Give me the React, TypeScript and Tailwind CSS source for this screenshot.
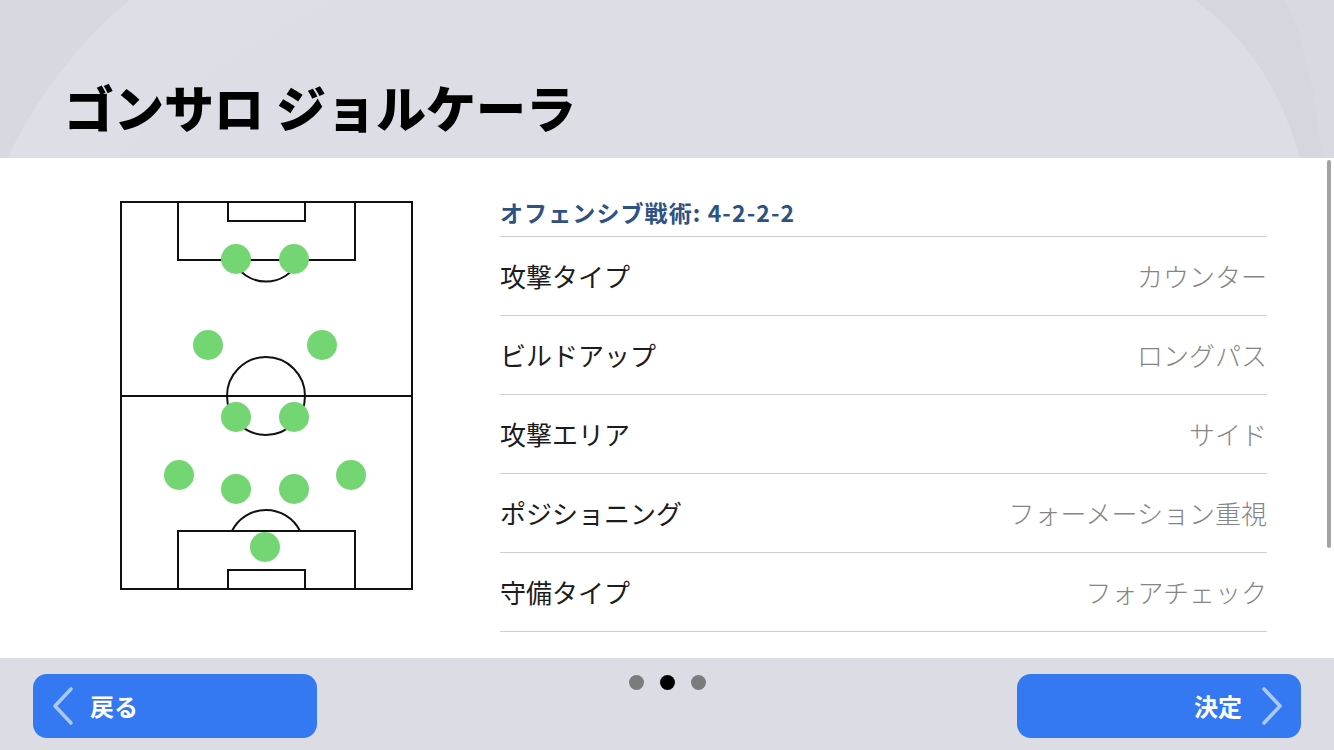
const rows = [
  { label: "攻撃タイプ", value: "カウンター" },
  { label: "ビルドアップ", value: "ロングパス" },
  { label: "攻撃エリア", value: "サイド" },
  { label: "ポジショニング", value: "フォーメーション重視" },
  { label: "守備タイプ", value: "フォアチェック" },
  { label: "守備エリア", value: "ミドル" },
];

// player dots, in pitch coords (pitch box starts at 1,1)
const players = [
  [116, 58], [174, 58],
  [88, 144], [202, 144],
  [116, 216], [174, 216],
  [59, 274], [231, 274],
  [116, 288], [174, 288],
  [145, 346],
];

export default function App() {
  return (
    <div
      className="relative flex h-[750px] w-[1334px] flex-col overflow-hidden bg-white"
      style={{ fontFamily: '"Noto Sans CJK JP", "Noto Sans", sans-serif' }}
    >
      <header className="relative h-[158px] shrink-0 overflow-hidden bg-[#dcdde5]">
        <HeaderDecor />
        <h1 className="relative pl-[64px] pt-[81px] text-[50px] font-black leading-none text-black">
          ゴンサロ<span className="ml-[12px]">ジョルケーラ</span>
        </h1>
      </header>

      <main className="relative flex h-[500px] shrink-0 bg-white">
        <div className="pl-[120px] pt-[43px]">
          <Pitch />
        </div>
        <div className="ml-[87px] w-[767px]">
          <div className="flex h-[79px] items-end border-b border-[#cdcdd2] pb-[12px]">
            <span className="text-[23px] font-bold leading-[23px] tracking-[1.1px] text-[#2d5283]">オフェンシブ戦術: 4-2-2-2</span>
          </div>
          {rows.map((r) => (
            <div key={r.label} className="flex h-[79px] items-center justify-between border-b border-[#cdcdd2]">
              <span className="text-[26px] leading-none text-[#1c1c1c]">{r.label}</span>
              <span className="text-[26px] font-light leading-none text-[#858585]">{r.value}</span>
            </div>
          ))}
        </div>
        <div className="absolute right-[3px] top-[2px] h-[388px] w-[4px] rounded-full bg-[#a3a3a3]" />
      </main>

      <footer className="relative flex h-[92px] shrink-0 items-start justify-between bg-[#dcdde4] px-[33px] pt-[16px]">
        <button className="flex h-[64px] w-[284px] items-center rounded-[14px] bg-[#3479f1] pl-[18px]">
          <Chevron dir="left" />
          <span className="ml-[15px] text-[24px] font-bold text-white">戻る</span>
        </button>
        <div className="flex gap-[16px] pt-[1px]">
          <span className="h-[15px] w-[15px] rounded-full bg-[#7b7b7e]" />
          <span className="h-[15px] w-[15px] rounded-full bg-black" />
          <span className="h-[15px] w-[15px] rounded-full bg-[#7b7b7e]" />
        </div>
        <button className="flex h-[64px] w-[284px] items-center justify-end rounded-[14px] bg-[#3479f1] pr-[17px]">
          <span className="mr-[18px] text-[24px] font-bold text-white">決定</span>
          <Chevron dir="right" />
        </button>
      </footer>
    </div>
  );
}

function Chevron({ dir }: { dir: "left" | "right" }) {
  return (
    <svg width="24" height="40" viewBox="0 0 24 40" className="shrink-0">
      <polyline
        points={dir === "left" ? "20,3 4,20 20,37" : "4,3 20,20 4,37"}
        fill="none"
        stroke="#a9c9f7"
        strokeWidth="3.6"
        strokeLinecap="round"
        strokeLinejoin="round"
      />
    </svg>
  );
}

function HeaderDecor() {
  return (
    <svg className="absolute inset-0" width="1334" height="158" viewBox="0 0 1334 158">
      <path d="M0 0 H130 C80 40 35 100 8 158 H0 Z" fill="#d8d9e0" />
      <path d="M130 0 H330 C240 40 160 100 120 158 H8 C35 100 80 40 130 0 Z" fill="#dedfe6" />
      <path d="M1195 0 H1334 V158 H1300 C1280 90 1250 40 1195 0 Z" fill="#d6d7de" />
      <path d="M1285 0 H1334 V158 H1322 C1315 90 1305 40 1285 0 Z" fill="#d9dae1" />
    </svg>
  );
}

function Pitch() {
  return (
    <svg width="293" height="389" viewBox="0 0 293 389">
      <g fill="none" stroke="#111" strokeWidth="2">
        <rect x="1" y="1" width="291" height="387" />
        <rect x="58" y="1" width="177" height="58" />
        <rect x="108" y="1" width="77" height="19" />
        <path d="M113 59 A36 36 0 0 0 179 59" />
        <line x1="1" y1="195" x2="292" y2="195" />
        <circle cx="146" cy="195" r="39" />
        <rect x="58" y="330" width="177" height="58" />
        <rect x="108" y="369" width="77" height="19" />
        <path d="M112 330 A38 38 0 0 1 180 330" />
      </g>
      {players.map(([x, y], i) => (
        <circle key={i} cx={x} cy={y} r="15" fill="#74d672" />
      ))}
    </svg>
  );
}
